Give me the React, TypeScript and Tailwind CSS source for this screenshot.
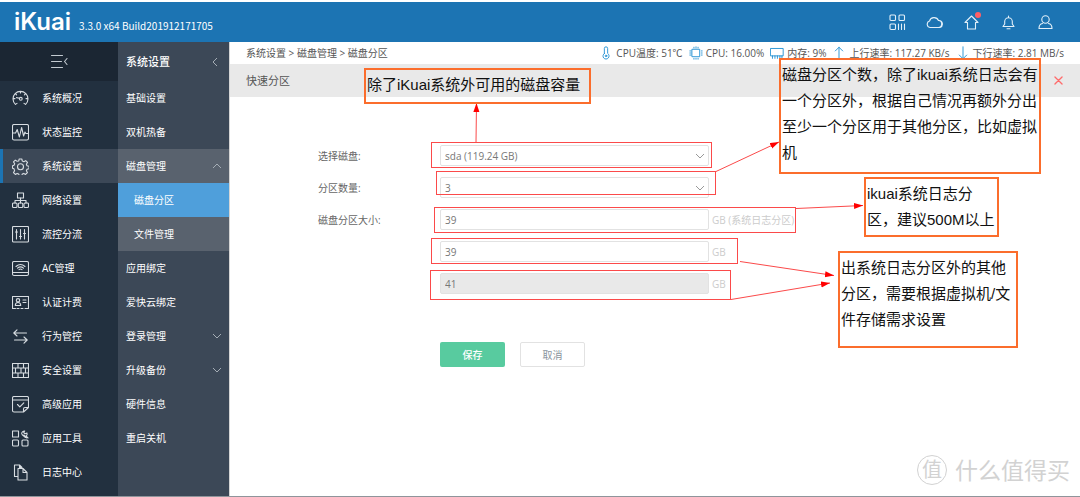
import type { ReactNode } from "react";

type IconProps = { children: ReactNode; className?: string; size?: number };

// thin outline icon on a 17 unit grid
function Icon({ children, className = "", size = 17 }: IconProps) {
  return (
    <svg
      width={size}
      height={size}
      viewBox="0 0 17 17"
      fill="none"
      stroke="currentColor"
      strokeWidth="1.1"
      strokeLinecap="round"
      strokeLinejoin="round"
      aria-hidden="true"
      className={`shrink-0 ${className}`}
    >
      {children}
    </svg>
  );
}

const mainMenu = [
  {
    title: "系统概况",
    icon: (
      <>
        <path d="M3.4 14.4A7.5 7.5 0 1 1 13.6 14.4M3.4 14.4l1.6-1M13.6 14.4l-1.6-1M1.2 8.6H3M14 8.6h1.8M8.5 1.2V3M3.4 3.6l1.2 1.2M13.6 3.6l-1.2 1.2" />
        <path d="M4.5 7.6l3 .6" />
        <circle cx="8.8" cy="8.8" r="1.4" />
      </>
    ),
  },
  {
    title: "状态监控",
    icon: (
      <>
        <rect x="0.5" y="0.5" width="16" height="15.5" rx="1.5" />
        <path d="M1 9h2.6l1.6-3.5 2.2 7.5L9.6 3.5l2 8.5 1.4-4 .9 1.5H16" />
      </>
    ),
  },
  {
    title: "系统设置",
    active: true,
    icon: (
      <>
        <path d="M7.2 1h2.6l.5 2 1.6.7 1.8-1.1 1.8 1.8-1.1 1.8.6 1.5 2 .5v2.6l-2 .5-.6 1.5 1 1.8-1.8 1.8-1.8-1-1.5.6-.5 1.6H7.2l-.5-1.6-1.6-.6-1.8 1-1.8-1.8 1.1-1.8L2 10.800l-1.500-.5V7.700l1.500-.5.7-1.500-1.200-1.800 1.800-1.800 1.800 1.100L6.700 3z" />
        <circle cx="8.5" cy="8.8" r="3" />
      </>
    ),
  },
  {
    title: "网络设置",
    icon: (
      <>
        <rect x="5.5" y="1" width="6" height="5" />
        <path d="M8.5 6v5M3 11V8.5h11V11" />
        <rect x="0.5" y="11" width="4.5" height="4.5" rx="1" />
        <rect x="6.3" y="11" width="4.5" height="4.5" rx="1" />
        <rect x="12" y="11" width="4.5" height="4.5" rx="1" />
      </>
    ),
  },
  {
    title: "流控分流",
    icon: (
      <>
        <rect x="0.5" y="0.5" width="16" height="15.5" rx="1" />
        <path d="M4.5 3.5V13M8.5 3.5V13M12.5 3.5V13M3.5 6h2M7.5 10.5h2M11.5 7.5h2" />
      </>
    ),
  },
  {
    title: "AC管理",
    icon: (
      <>
        <rect x="0.5" y="1.5" width="16" height="14" rx="1.5" />
        <path d="M0.5 12.5h16M4 6.5q4.5-4 9 0M5.5 8.2q3-2.6 6 0M7 9.7q1.500-1.300 3 0" />
      </>
    ),
  },
  {
    title: "认证计费",
    icon: (
      <>
        <path d="M0.5 14V2.5h16V14M0.5 14.5h3M5 14.5h2M9 14.5h2M13 14.5h3.5" />
        <circle cx="6" cy="6.3" r="1.7" />
        <path d="M3.3 11.5q0-3 2.700-3t2.700 3zM11 6h3M11 8.500h3" />
      </>
    ),
  },
  {
    title: "行为管控",
    icon: <path d="M14.5 5H1.8M5 1.8L1.8 5 5 8M2.5 12h12.7M12 9l3.2 3-3.2 3.2" />,
  },
  {
    title: "安全设置",
    icon: (
      <>
        <rect x="0.5" y="1.5" width="16" height="14" />
        <path d="M0.5 6h16M0.5 11h16M6 1.5V6M11.5 1.5V6M3.5 6v5M9 6v5M13.5 6v5M6 11v4.5M11.5 11v4.5" />
      </>
    ),
  },
  {
    title: "高级应用",
    icon: (
      <path d="M11.5 16H2Q.5 16 .5 14.5V2Q.5.5 2 .5h13Q16.5.5 16.5 2v9.5zM11.5 16v-3q0-1.500 1.500-1.500h3.500M.5 4h16M5.500 8.500l2.300 2.300 4-4" />
    ),
  },
  {
    title: "应用工具",
    icon: (
      <>
        <rect x="0.5" y="1" width="6" height="6" />
        <rect x="0.5" y="10" width="6" height="6" rx="1" />
        <rect x="10" y="10" width="6" height="6" rx="1" />
        <path d="M9.7 3.5a2.700 2.700 0 0 1 3-2.500l-1 1.500 1.300 1.300L15 3q.6 2-1 3l2 2M10 4.500l3.500 3M12 5l2.500 2.800" />
      </>
    ),
  },
  {
    title: "日志中心",
    icon: <path d="M5.5 12.5h-3V1h5L10 3.5M7.500 1v2.500H10M6 4.500h5l4 4V16H6zM11 4.500v4h4" />,
  },
];

const subMenu = [
  { title: "基础设置" },
  { title: "双机热备" },
  { title: "磁盘管理", kind: "open" },
  { title: "磁盘分区", kind: "current" },
  { title: "文件管理", kind: "child" },
  { title: "应用绑定" },
  { title: "爱快云绑定" },
  { title: "登录管理", kind: "closed" },
  { title: "升级备份", kind: "closed" },
  { title: "硬件信息" },
  { title: "重启关机" },
];

function subMenuClass(kind?: string) {
  if (kind === "current") return "pl-4 bg-[#4f9fdb]";
  if (kind === "child") return "pl-4 bg-[#59626e]";
  if (kind === "open") return "pl-2 bg-[#59626e]";
  return "pl-2";
}

function Chevron({ className = "" }: { className?: string }) {
  return (
    <svg
      width="10"
      height="6"
      viewBox="0 0 10 6"
      fill="none"
      stroke="currentColor"
      aria-hidden="true"
      className={className}
    >
      <path d="M1 1l4 4 4-4" />
    </svg>
  );
}

function Header() {
  return (
    <header className="h-[42px] shrink-0 border-t-2 border-white bg-[#1c74b3] text-white flex items-center justify-between pl-[14px] pr-[26px]">
      <div className="flex items-baseline gap-2">
        <h1 className="font-[Inter] font-semibold text-2xl leading-8">iKuai</h1>
        <span className="font-['Noto_Sans_CJK_SC'] text-[10px]">3.3.0 x64 Build201912171705</span>
      </div>
      <div className="flex items-center gap-5 text-[#e3f0f9]">
        <button aria-label="应用">
          <Icon>
            <rect x="1" y="1" width="5.5" height="5.5" rx="1" />
            <rect x="10" y="1" width="5.5" height="5.5" rx="1" />
            <rect x="1" y="10" width="5.5" height="5.5" rx="1" />
            <path d="M9.5 10v5.5M12.5 10v5.5M15.5 10v5.5" />
          </Icon>
        </button>
        <button aria-label="云">
          <Icon>
            <path d="M4 13.5a3.300 3.300 0 0 1-.5-6.400A4.800 4.800 0 0 1 12.500 6.500a3.500 3.500 0 0 1-.7 7zM13 6.500a3.600 3.600 0 0 1 1 7" />
          </Icon>
        </button>
        <button aria-label="升级" className="relative">
          <Icon>
            <path d="M8.5 2L2 8.5h2.500V15h8V8.500H15z" />
          </Icon>
          <span className="absolute -top-0.5 -right-px w-1.5 h-1.5 rounded-full bg-[#ff5f66]" />
        </button>
        <button aria-label="通知">
          <Icon>
            <path d="M3 12.5h11l-1.700-2.500V7.500a3.800 3.800 0 0 0-7.600 0V10zM8.500 3.500V2M7 14.800h3" />
          </Icon>
        </button>
        <button aria-label="用户">
          <Icon>
            <circle cx="8.5" cy="5.5" r="3.7" />
            <path d="M5.5 9.5Q2 10 2 14.5h13Q15 10 11.500 9.500" />
          </Icon>
        </button>
      </div>
    </header>
  );
}

function Sidebar() {
  return (
    <nav className="w-[118px] shrink-0 bg-[#22303f] text-white">
      <button
        aria-label="收起菜单"
        className="w-full h-[39px] bg-[#1b2633] flex items-center justify-center text-[#c3cad1]"
      >
        <Icon>
          <path d="M.5 2.5h11M.5 8.5h10M.5 14.5h11M16 5.5l-2.500 3 2.500 3" />
        </Icon>
      </button>
      {mainMenu.map((item) => (
        <a
          href="#"
          key={item.title}
          className={`h-[34px] flex items-center gap-[13px] border-l-3 pl-[9px] ${
            item.active ? "border-[#1c74b3] bg-[#3c4857]" : "border-transparent"
          }`}
        >
          <Icon className="text-[#d8dde2]">{item.icon}</Icon>
          <span>{item.title}</span>
        </a>
      ))}
    </nav>
  );
}

function SubMenu() {
  return (
    <nav className="w-28 shrink-0 bg-[#3c4857] text-white border-r border-[#d5d5d5]">
      <div className="h-[39px] flex items-center justify-between pl-2 pr-[9px]">
        <h2 className="text-[11px] font-medium">系统设置</h2>
        <Chevron className="rotate-90 text-[#a5adb5]" />
      </div>
      {subMenu.map((item) => (
        <a
          href="#"
          key={item.title}
          className={`h-[34px] flex items-center justify-between pr-[7px] ${subMenuClass(item.kind)}`}
        >
          {item.title}
          {item.kind === "open" && <Chevron className="rotate-180 text-[#a5adb5]" />}
          {item.kind === "closed" && <Chevron className="text-[#a5adb5]" />}
        </a>
      ))}
    </nav>
  );
}

const stats = [
  {
    text: "CPU温度: 51℃",
    icon: (
      <>
        <path d="M6.5 9V3a2 2 0 0 1 4 0v6a3.700 3.700 0 1 1-4 0z" />
        <circle cx="8.5" cy="12" r="1" />
      </>
    ),
  },
  {
    text: "CPU: 16.00%",
    icon: (
      <>
        <rect x="4" y="4" width="9" height="9" />
        <path d="M6 1.5v1M8.500 1v1.500M11 1.500v1M6 15v1M8.500 15v1M11 15v1M1 6h1.500M1 8.500h1.500M1 11h1.500M15 6h1M15 8.500h1M15 11h1" />
      </>
    ),
  },
  {
    text: "内存: 9%",
    icon: <path d="M1 3h15v9H1zM3 12v3M6 12v3M9 12v3M12 12v3M14.5 12v3" />,
  },
  { text: "上行速率: 117.27 KB/s", icon: <path d="M8.5 16V1.5M4 6l4.500-4.500L13 6" /> },
  { text: "下行速率: 2.81 MB/s", icon: <path d="M8.5 1v14.5M4 11l4.500 4.500L13 11" /> },
];

function StatusBar() {
  return (
    <div className="h-[22px] flex items-center justify-between px-4 text-[#555]">
      <p>系统设置 &gt; 磁盘管理 &gt; 磁盘分区</p>
      <ul className="flex items-center gap-1.5">
        {stats.map((stat) => (
          <li key={stat.text} className="flex items-center gap-[3px] whitespace-nowrap">
            <Icon size={14} className="text-[#1e8fd3]">
              {stat.icon}
            </Icon>
            {stat.text}
          </li>
        ))}
      </ul>
    </div>
  );
}

const field =
  "w-[269px] h-[21px] px-1 border border-[#e2e2e2] rounded-xs bg-white text-[#777] appearance-none disabled:bg-[#e9e9e9] disabled:opacity-100";

function SelectBox({ id, value }: { id: string; value: string }) {
  return (
    <div className="relative w-[269px]">
      <select id={id} className={`block ${field}`} defaultValue={value}>
        <option>{value}</option>
      </select>
      <Chevron className="absolute right-1 top-2 text-[#999] pointer-events-none" />
    </div>
  );
}

function PartitionForm() {
  return (
    <form className="pl-[88px] pt-12 text-[#666]" onSubmit={(e) => e.preventDefault()}>
      <div className="grid grid-cols-[122px_1fr] gap-y-[11px] items-center">
        <label htmlFor="disk">选择磁盘:</label>
        <SelectBox id="disk" value="sda (119.24 GB)" />
        <label htmlFor="count">分区数量:</label>
        <SelectBox id="count" value="3" />
        <label htmlFor="size1">磁盘分区大小:</label>
        <div className="flex items-center gap-[3px] text-[#ccc]">
          <input id="size1" className={field} defaultValue="39" />
          GB (系统日志分区)
        </div>
        <div className="col-start-2 flex items-center gap-[3px] text-[#ccc]">
          <input aria-label="分区 2" className={field} defaultValue="39" />
          GB
        </div>
        <div className="col-start-2 flex items-center gap-[3px] text-[#ccc]">
          <input aria-label="分区 3" className={field} defaultValue="41" disabled />
          GB
        </div>
      </div>
      <div className="flex gap-[15px] pl-[122px] pt-12">
        <button className="w-[65px] h-[25px] rounded-xs bg-[#58cb9f] text-white font-medium">保存</button>
        <button type="button" className="w-[65px] h-[25px] rounded-xs border border-[#e2e2e2] text-[#8a939c]">
          取消
        </button>
      </div>
    </form>
  );
}

const note =
  "absolute border-2 border-[#fb6d2c] pl-px pt-0.5 text-[15px] leading-[26px] text-[#111] whitespace-nowrap font-['Liberation_Sans','Noto_Sans_CJK_SC',sans-serif]";

// hand-drawn remarks laid over the page
function Annotations() {
  return (
    <div className="absolute inset-0 pointer-events-none">
      <svg width="1080" height="497" className="absolute left-0 top-0" fill="none" stroke="#fb4a4a">
        <defs>
          <marker
            id="head"
            markerWidth="10"
            markerHeight="8"
            refX="9"
            refY="3"
            orient="auto"
            markerUnits="userSpaceOnUse"
          >
            <path d="M0 0l9 3-9 3z" fill="#f00" stroke="none" />
          </marker>
        </defs>
        <rect x="431.5" y="142.5" width="280" height="25" />
        <rect x="436.5" y="171.5" width="279" height="23" />
        <rect x="434.5" y="207.5" width="361" height="25" />
        <rect x="431.5" y="238.5" width="306" height="25" />
        <rect x="430.5" y="270.5" width="300" height="29" />
        <path d="M476 142l.5-39" markerEnd="url(#head)" />
        <path d="M716 171.5L779 142" markerEnd="url(#head)" />
        <path d="M796 208.5l67-3" markerEnd="url(#head)" />
        <path d="M740 261.5l94 14" markerEnd="url(#head)" />
        <path d="M731 299.5L830 283" markerEnd="url(#head)" />
      </svg>
      <p className={`${note} left-[364px] top-[68px] w-[227px] h-9`}>除了iKuai系统外可用的磁盘容量</p>
      <p className={`${note} left-[779px] top-[58px] w-[262px] h-[116px]`}>
        磁盘分区个数，除了ikuai系统日志会有
        <br />
        一个分区外，根据自己情况再额外分出
        <br />
        至少一个分区用于其他分区，比如虚拟
        <br />机
      </p>
      <p className={`${note} left-[864px] top-[177px] w-[135px] h-[60px]`}>
        ikuai系统日志分
        <br />
        区，建议500M以上
      </p>
      <p className={`${note} left-[838px] top-[251px] w-[180px] h-[97px]`}>
        出系统日志分区外的其他
        <br />
        分区，需要根据虚拟机/文
        <br />
        件存储需求设置
      </p>
    </div>
  );
}

function Watermark() {
  return (
    <div className="absolute right-2.5 bottom-2.5 flex items-center gap-2 text-[#d2d2d2]">
      <span className="w-[30px] h-[30px] rounded-full border border-[#d2d2d2] flex items-center justify-center text-xl leading-none">
        值
      </span>
      <span className="text-[23px] leading-8">什么值得买</span>
    </div>
  );
}

export default function App() {
  return (
    <div className="relative min-h-screen flex flex-col bg-white font-['Open_Sans','Noto_Sans_CJK_SC',sans-serif] text-[10px] leading-4 border-b border-[#8f959b]">
      <Header />
      <div className="flex flex-1">
        <Sidebar />
        <SubMenu />
        <main className="flex-1">
          <StatusBar />
          <div className="h-[33px] bg-[#e9e9e9] flex items-center justify-between px-4 text-[#555]">
            <h2 className="text-[11px]">快速分区</h2>
            <button aria-label="关闭">
              <Icon size={11} className="text-[#ff6b6b]">
                <path d="M3 3l11 11M14 3L3 14" strokeWidth="2" />
              </Icon>
            </button>
          </div>
          <PartitionForm />
        </main>
      </div>
      <Annotations />
      <Watermark />
    </div>
  );
}
